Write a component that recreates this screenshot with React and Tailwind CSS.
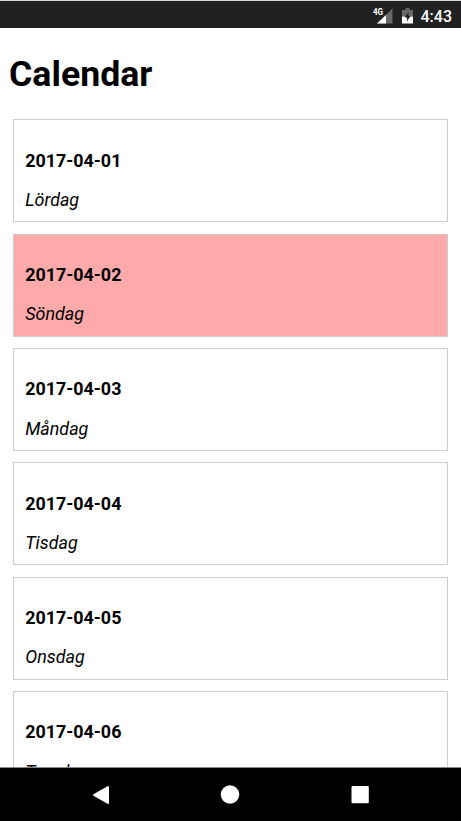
const days = [
  ["2017-04-01", "Lördag"],
  ["2017-04-02", "Söndag"],
  ["2017-04-03", "Måndag"],
  ["2017-04-04", "Tisdag"],
  ["2017-04-05", "Onsdag"],
  ["2017-04-06", "Torsdag"],
];

export default function App() {
  return (
    <div className="flex h-[821px] w-[461px] flex-col overflow-hidden bg-white font-['Roboto',sans-serif] text-black">
      <header className="flex h-7 shrink-0 items-center justify-end border-t border-[#d4d8d8] bg-[#212121] pt-[4px] pr-[9px] text-white">
        <svg className="mr-[9px] h-[18px] w-[20px]" viewBox="0 0 20 18">
          <path d="M19.500 0.500V15.500H4Z" fill="#686868" />
          <path d="M13 7V15.500H4Z" fill="#fff" />
          <rect x="0" y="0" width="11" height="7" fill="#212121" />
          <text x="0" y="6.500" fontSize="9" fontWeight="700" fill="#fff" textLength="10" lengthAdjust="spacingAndGlyphs">4G</text>
        </svg>
        <svg className="mr-2 h-[18px] w-[11px]" viewBox="0 0 11 18">
          <path d="M3.500 0h4v2H11v6.500H0V2h3.500z" fill="#686868" />
          <path d="M0 8.500h11v7H0z" fill="#fff" />
          <path d="M6.500 4 2.500 9.500h2.500v4l3.500-5.500H6.500z" fill="#212121" />
        </svg>
        <span className="text-base leading-5 font-medium">4:43</span>
      </header>
      <main className="flex min-h-0 flex-1 flex-col overflow-hidden">
        <h1 className="mt-[25px] ml-[9px] shrink-0 text-[35.700px] leading-[42px] font-bold">Calendar</h1>
        <div className="mt-[24.400px] flex flex-col gap-[11.350px] pr-[13px] pl-[13px]">
          {days.map(([date, day]) => (
            <section key={date} className={`h-[103px] shrink-0 border border-[#cccccc] pl-[11.200px] ${day === "Söndag" ? "bg-[#ffaaaa]" : "bg-white"}`}>
              <h2 className="mt-[29.300px] text-[17.900px] leading-[22px] font-bold">{date}</h2>
              <p className="mt-[17.200px] text-[17.900px] leading-[22px] italic">{day}</p>
            </section>
          ))}
        </div>
      </main>
      <nav className="flex h-[54px] shrink-0 items-center justify-center border-t border-[#888888] bg-black">
        <svg className="h-[53px] w-[461px]" viewBox="0 0 461 53" fill="#fff" strokeLinejoin="round">
          <path d="M94 27 108 19V35Z" stroke="#fff" strokeWidth="2" />
          <circle cx="230" cy="26.500" r="9.300" />
          <rect x="351.500" y="18" width="17.300" height="17.300" rx="1" />
        </svg>
      </nav>
    </div>
  );
}
